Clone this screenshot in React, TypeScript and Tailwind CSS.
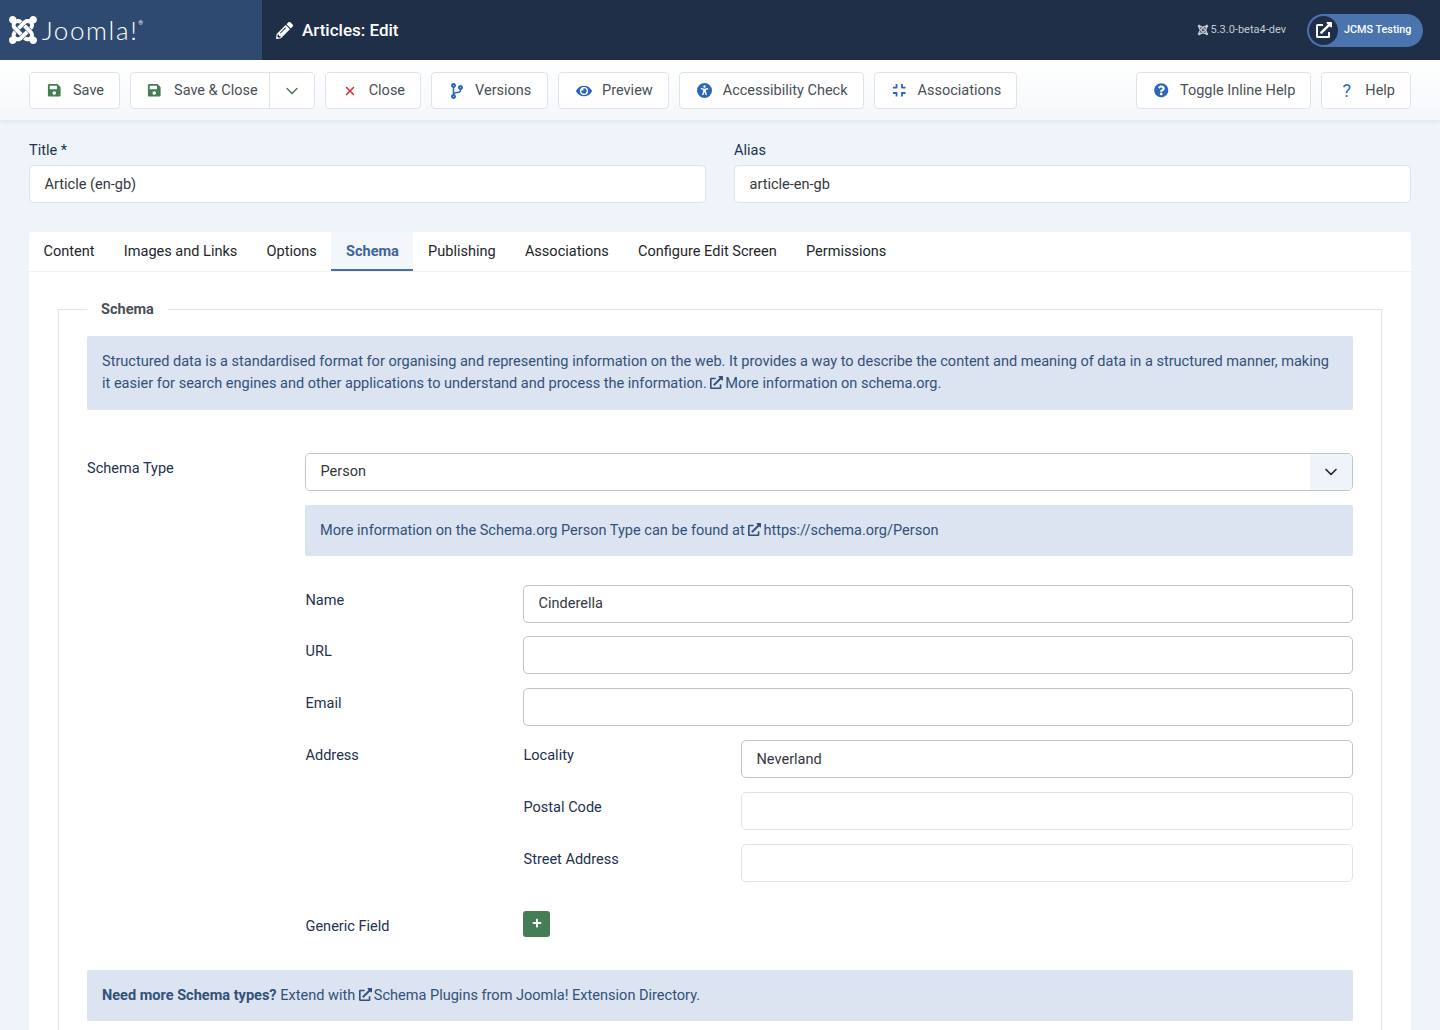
import type { ReactNode } from "react";
import { ChevronDown, X } from "lucide-react";
import {
  FaCodeBranch,
  FaCompress,
  FaExternalLinkAlt,
  FaEye,
  FaJoomla,
  FaPencilAlt,
  FaPlus,
  FaQuestionCircle,
  FaSave,
} from "react-icons/fa";
import { FaUniversalAccess } from "react-icons/fa6";

const tabs = [
  "Content",
  "Images and Links",
  "Options",
  "Schema",
  "Publishing",
  "Associations",
  "Configure Edit Screen",
  "Permissions",
];

const ToolButton = ({ icon, label, className = "" }: { icon: ReactNode; label: string; className?: string }) => (
  <button className={`flex h-[37px] items-center rounded-[4px] border border-[#dfe3ec] bg-white pl-4 pr-[15px] text-[14.5px] text-[#495057] ${className}`}>
    <span className="flex w-[17px] justify-center">{icon}</span>
    <span className="ml-[10px]">{label}</span>
  </button>
);

const Input = ({ value = "", dark = false, className = "" }: { value?: string; dark?: boolean; className?: string }) => (
  <div className={`flex h-[38px] flex-1 items-center rounded-[5px] border bg-white px-[14.5px] text-[#33383d] ${dark ? "border-[#bcc8c4]" : "border-[#dfe3ec]"} ${className}`}>
    {value}
  </div>
);

const Alert = ({ children, className = "" }: { children: ReactNode; className?: string }) => (
  <div className={`rounded-[2px] bg-[#dbe4f0] px-[15px] text-[#34507a] ${className}`}>{children}</div>
);

const LinkIcon = () => <FaExternalLinkAlt className="mr-[2px] inline-block align-[-1px] text-[13px]" />;

const Row = ({ label, children }: { label: string; children: ReactNode }) => (
  <div className="flex">
    <div className="w-[218px] shrink-0 pl-[0.5px] pt-[5px] text-[#24314f]">{label}</div>
    {children}
  </div>
);

export default function App() {
  return (
    <div className="h-[1030px] overflow-hidden bg-[#eff4fb] font-['Roboto',sans-serif] text-[14.54px] leading-[22px]">
      <header className="flex h-[60px] bg-[#1f2f48]">
        <div className="flex w-[262px] items-center bg-[#2f4a70] pl-[7px] text-white">
          <FaJoomla className="text-[32px]" />
          <span className="ml-[3px] font-['Lato',sans-serif] text-[26px] font-light leading-none tracking-[1.6px]">Joomla!</span>
          <span className="mb-[14px] text-[6px] leading-none">®</span>
        </div>
        <div className="flex flex-1 items-center pl-[14px] text-white">
          <FaPencilAlt className="text-[17px]" />
          <h1 className="ml-[9px] text-[17px] font-medium">Articles: Edit</h1>
          <div className="ml-auto flex items-center text-[11px] text-[#c4cad3]">
            <FaJoomla className="mr-[2px] text-[12px]" />
            5.3.0-beta4-dev
          </div>
          <div className="ml-[21px] mr-[17px] flex h-[33px] w-[116px] items-center rounded-full bg-[#4a74ae] pl-[2px] text-[10.8px] font-medium">
            <span className="flex h-[29px] w-[29px] items-center justify-center rounded-full bg-[#1f2f48]">
              <FaExternalLinkAlt className="text-[16px]" />
            </span>
            <span className="ml-[6px]">JCMS Testing</span>
          </div>
        </div>
      </header>

      <div className="flex h-[60px] items-start gap-[10px] bg-gradient-to-b from-white to-[#f4f7fb] px-[29px] pt-[12px] shadow-[0_2px_4px_rgba(47,74,112,0.08)]">
        <ToolButton icon={<FaSave className="text-[#457d54]" />} label="Save" />
        <div className="flex h-[37px] items-center rounded-[4px] border border-[#dfe3ec] bg-white text-[14.5px] text-[#495057]">
          <span className="ml-4 flex w-[15px] justify-center"><FaSave className="text-[#457d54]" /></span>
          <span className="ml-[12px] mr-[11px]">Save &amp; Close</span>
          <span className="flex h-full w-[45px] items-center justify-center border-l border-[#dfe3ec]">
            <ChevronDown size={20} strokeWidth={1.75} className="text-[#457d54]" />
          </span>
        </div>
        <ToolButton icon={<X size={14} strokeWidth={2.5} className="text-[#d6262e]" />} label="Close" />
        <ToolButton className="w-[117px]" icon={<FaCodeBranch className="text-[16px] text-[#2a69b8]" />} label="Versions" />
        <ToolButton icon={<FaEye className="text-[16px] text-[#2a69b8]" />} label="Preview" />
        <ToolButton icon={<FaUniversalAccess className="text-[15px] text-[#2a69b8]" />} label="Accessibility Check" />
        <ToolButton icon={<FaCompress className="text-[#2a69b8]" />} label="Associations" />
        <ToolButton className="ml-auto" icon={<FaQuestionCircle className="text-[#2a69b8]" />} label="Toggle Inline Help" />
        <ToolButton icon={<span className="text-[18px] text-[#2a69b8]">?</span>} label="Help" />
      </div>

      <main className="px-[29px] pt-[19px]">
        <div className="grid grid-cols-2 gap-[28px]">
          <div>
            <label className="block pb-[3px] pt-[1px] text-[#24314f]">Title *</label>
            <Input value="Article (en-gb)" className="pt-[2px]" />
          </div>
          <div>
            <label className="block pb-[3px] pt-[1px] text-[#24314f]">Alias</label>
            <Input value="article-en-gb" className="pt-[2px]" />
          </div>
        </div>

        <div className="mt-[29px] rounded-[2px] bg-white">
          <div className="flex h-[40px] border-b border-[#eef1f6]">
            {tabs.map((tab) =>
              tab === "Schema" ? (
                <div key={tab} className="flex h-[39px] items-center border-b-[2px] border-[#4a6fa5] bg-[#f3f6fa] px-[14.6px] pt-[2px] font-bold text-[#3f6398]">
                  {tab}
                </div>
              ) : (
                <div key={tab} className="flex h-[39px] items-center border-b-[2px] border-transparent px-[14.6px] pt-[2px] text-[#22262a]">
                  {tab}
                </div>
              )
            )}
          </div>

          <div className="px-[29px] pt-[26px]">
            <fieldset className="border border-[#dfe3ec] px-[28px] pb-[40px]">
              <legend className="h-[22px] px-[14px] pt-[1px] font-bold text-[#495057]">Schema</legend>

              <Alert className="mt-[16px] py-[15px]">
                Structured data is a standardised format for organising and representing information on the web. It provides a way to describe the content and meaning of data in a structured manner, making it easier for search engines and other applications to understand and process the information. <LinkIcon />More information on schema.org.
              </Alert>

              <div className="mt-[43px] flex">
                <div className="w-[218px] shrink-0 pt-[5px] text-[#24314f]">Schema Type</div>
                <div className="flex-1">
                  <div className="flex h-[38px] items-center overflow-hidden rounded-[5px] border border-[#bcc8c4] bg-white pl-[14.5px] text-[#33383d]">
                    <span className="flex-1">Person</span>
                    <span className="flex h-full w-[42px] items-center justify-center bg-[#eff4fb]">
                      <ChevronDown size={20} className="text-[#22262a]" />
                    </span>
                  </div>
                  <Alert className="mt-[14px] flex h-[51px] items-center">
                    <span>More information on the Schema.org Person Type can be found at <LinkIcon />https://schema.org/Person</span>
                  </Alert>

                  <div className="mt-[28.6px] flex flex-col gap-[13.75px]">
                    <Row label="Name"><Input value="Cinderella" dark /></Row>
                    <Row label="URL"><Input dark /></Row>
                    <Row label="Email"><Input dark /></Row>
                    <Row label="Address">
                      <div className="flex flex-1 flex-col gap-[14px]">
                        <Row label="Locality"><Input value="Neverland" dark className="pt-[2px]" /></Row>
                        <Row label="Postal Code"><Input /></Row>
                        <Row label="Street Address"><Input /></Row>
                      </div>
                    </Row>
                    <div className="mt-[15px] flex">
                      <div className="w-[218px] shrink-0 pl-[0.5px] pt-[5px] text-[#24314f]">Generic Field</div>
                      <button className="flex h-[26px] w-[27px] items-center justify-center rounded-[3px] bg-[#457d54] pb-[2px] text-white">
                        <FaPlus className="text-[10px]" />
                      </button>
                    </div>
                  </div>
                </div>
              </div>

              <Alert className="mt-[32px] flex h-[51px] items-center pt-[2px]">
                <span><b className="font-bold">Need more Schema types?</b> Extend with <LinkIcon />Schema Plugins from Joomla! Extension Directory.</span>
              </Alert>
            </fieldset>
          </div>
        </div>
      </main>
    </div>
  );
}
